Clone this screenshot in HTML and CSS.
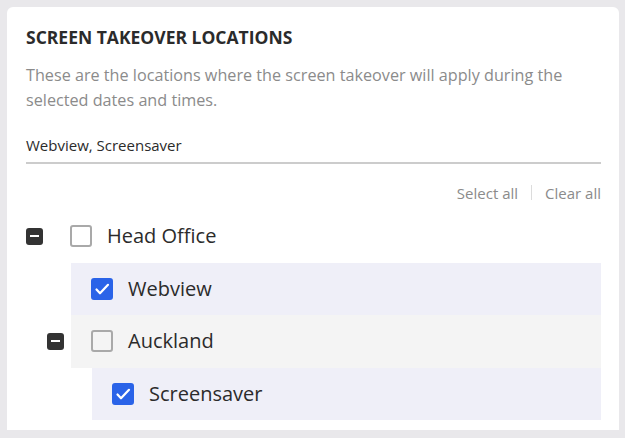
FILE: index.html
```html
<!DOCTYPE html>
<html>
<head>
<meta charset="utf-8">
<link rel="stylesheet" href="styles.css">
</head>
<body>
<div class="card">
  <h2 class="title">SCREEN TAKEOVER LOCATIONS</h2>
  <p class="desc">These are the locations where the screen takeover will apply during the selected dates and times.</p>
  <div class="field">Webview, Screensaver</div>
  <div class="actions">
    <span class="action">Select all</span>
    <span class="sep"></span>
    <span class="action">Clear all</span>
  </div>
  <div class="tree">
    <div class="node d0">
      <span class="toggle"></span>
      <div class="row">
        <span class="cb"></span>
        <span class="label">Head Office</span>
      </div>
    </div>
    <div class="node d1">
      <span class="toggle none"></span>
      <div class="row sel">
        <span class="cb on"><svg viewBox="0 0 22 22" width="22" height="22"><path d="M5.5 11.5 L9 15.3 L17 6.8" fill="none" stroke="#fff" stroke-width="2.2" stroke-linecap="round" stroke-linejoin="round"/></svg></span>
        <span class="label">Webview</span>
      </div>
    </div>
    <div class="node d1">
      <span class="toggle"></span>
      <div class="row grey">
        <span class="cb"></span>
        <span class="label">Auckland</span>
      </div>
    </div>
    <div class="node d2">
      <span class="toggle none"></span>
      <div class="row sel">
        <span class="cb on"><svg viewBox="0 0 22 22" width="22" height="22"><path d="M5.5 11.5 L9 15.3 L17 6.8" fill="none" stroke="#fff" stroke-width="2.2" stroke-linecap="round" stroke-linejoin="round"/></svg></span>
        <span class="label">Screensaver</span>
      </div>
    </div>
  </div>
</div>
</body>
</html>
```
FILE: styles.css
```css
html, body {
  margin: 0;
  padding: 0;
  background: #e9e8eb;
  font-family: "Open Sans", "Noto Sans", sans-serif;
  overflow: hidden;
}
.card {
  margin: 7px 6px 0 7px;
  background: #fff;
  border-radius: 6px 6px 0 0;
  padding: 18px 18px 10px 19px;
  height: 395px;
}
.title {
  margin: 0;
  font-size: 17.5px;
  font-weight: 700;
  color: #2b2b2b;
  line-height: 24px;
}
.desc {
  margin: 14px 0 0;
  font-size: 16.2px;
  line-height: 25px;
  color: #8b8b8b;
}
.field {
  margin-top: 21.5px;
  font-size: 15px;
  color: #2b2b2b;
  line-height: 20px;
  padding-bottom: 7.3px;
  border-bottom: 2px solid #cccccc;
}
.actions {
  display: flex;
  justify-content: flex-end;
  align-items: center;
  margin-top: 19px;
  font-size: 15px;
  line-height: 20px;
  color: #8b8b8b;
}
.sep {
  width: 1px;
  height: 15px;
  background: #dcdcdc;
  margin: 0 13px;
}
.tree {
  margin-top: 7.3px;
}
.node {
  display: flex;
  align-items: center;
}
.node.d1 { padding-left: 21px; }
.node.d2 { padding-left: 42px; }
.toggle {
  width: 17px;
  height: 17px;
  border-radius: 3px;
  background: #333;
  margin-right: 7px;
  position: relative;
  flex: none;
}
.toggle::after {
  content: "";
  position: absolute;
  left: 4px;
  right: 4px;
  top: 7.5px;
  height: 2px;
  background: #fff;
}
.toggle.none { background: transparent; }
.toggle.none::after { display: none; }
.row {
  flex: 1;
  display: flex;
  align-items: center;
  height: 52.5px;
  padding-left: 20px;
}
.row.sel { background: #efeff8; }
.row.grey { background: #f4f4f4; }
.cb {
  width: 22px;
  height: 22px;
  box-sizing: border-box;
  border: 2px solid #a9a9a9;
  border-radius: 3px;
  flex: none;
  display: flex;
}
.cb.on {
  background: #2a63e8;
  border-color: #2a63e8;
}
.cb.on svg { margin: -2px; }
.label {
  margin-left: 15px;
  font-size: 20px;
  line-height: 28px;
  color: #2b2b2b;
}
```
